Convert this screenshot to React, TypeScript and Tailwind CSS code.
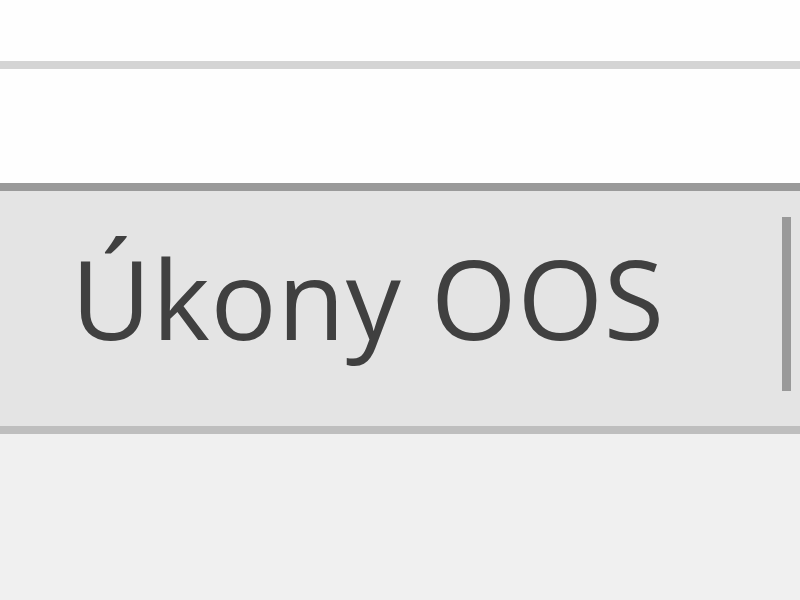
export default function App() {
  return (
    <div className="flex flex-col w-[800px] h-[600px] overflow-hidden bg-[#f0f0f0]" style={{ fontFamily: '"Open Sans", "Noto Sans", sans-serif' }}>
      <div className="h-[61px] bg-[#fefefe]" />
      <div className="h-[8px] bg-[#d4d4d4]" />
      <div className="h-[114px] bg-[#fefefe]" />
      <div className="flex items-start h-[251px] border-t-[8px] border-b-[8px] border-t-[#9a9a9a] border-b-[#bebebe] bg-[#e4e4e4]">
        <div className="flex-1 pl-[71px] pt-[46px] text-[110px] leading-[120px] tracking-[0.8px] text-[#404040] whitespace-nowrap">
          Úkony OOS
        </div>
        <div className="mt-[26px] mr-[9px] w-[9px] h-[174px] bg-[#999999]" />
      </div>
      <div className="flex-1 bg-[#f0f0f0]" />
    </div>
  );
}
